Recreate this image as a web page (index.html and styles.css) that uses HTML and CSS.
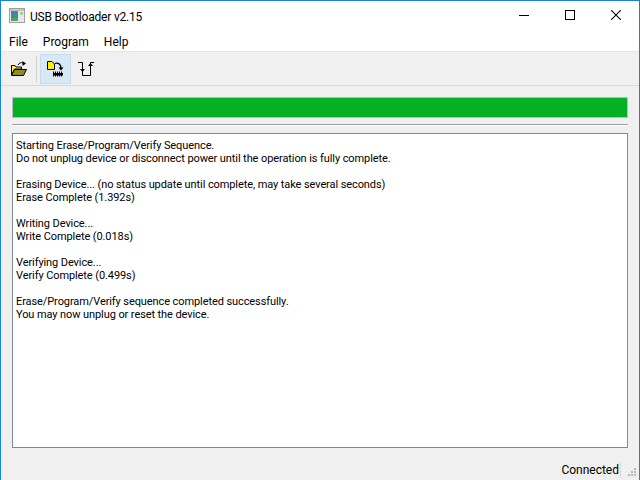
FILE: index.html
```html
<!DOCTYPE html>
<html lang="en">
<head>
<meta charset="utf-8">
<title>USB Bootloader v2.15</title>
<link rel="stylesheet" href="styles.css">
</head>
<body>
<div class="window">
  <header class="titlebar">
    <svg class="appicon" width="16" height="16" viewBox="0 0 16 16">
      <rect x="0.5" y="0.5" width="15" height="14" fill="#e8e8e8" stroke="#a0a0a0"/>
      <rect x="1" y="1" width="14" height="2" fill="#c4c4c4"/>
      <rect x="2" y="3" width="7" height="10" fill="#3f8f8f"/>
      <rect x="2" y="3" width="7" height="3" fill="#5a78a8"/>
      <rect x="2" y="10" width="7" height="3" fill="#5aa060"/>
      <rect x="11" y="4" width="3" height="3" fill="#a8d0a8"/>
    </svg>
    <span class="title">USB Bootloader v2.15</span>
    <div class="winbtns">
      <svg class="winbtn" width="10" height="10" viewBox="0 0 10 10"><path d="M0 5.5H10" stroke="#000" fill="none"/></svg>
      <svg class="winbtn" width="10" height="10" viewBox="0 0 10 10"><rect x="0.5" y="0.5" width="9" height="9" fill="none" stroke="#000"/></svg>
      <svg class="winbtn" width="10" height="10" viewBox="0 0 10 10"><path d="M0 0L10 10M10 0L0 10" stroke="#000" fill="none" stroke-width="1.05"/></svg>
    </div>
  </header>
  <nav class="menubar">
    <span class="menu">File</span>
    <span class="menu">Program</span>
    <span class="menu">Help</span>
  </nav>
  <div class="toolbar">
    <button class="tool">
      <svg width="17" height="18" viewBox="0 0 17 18">
        <path d="M1.5 5.5H5L6 7H11.5V9H4.5L1.5 15Z" fill="#ffe960" stroke="#000"/>
        <path d="M1.5 15.5L4.5 9.5H16.5L13.5 15.5Z" fill="#8f8f18" stroke="#000"/>
        <path d="M8 5C9 3 11 2 13 3" fill="none" stroke="#000"/>
        <path d="M12.5 1L16 3.5L12.5 6Z" fill="#000"/>
      </svg>
    </button>
    <span class="tooldiv"></span>
    <button class="tool active">
      <svg width="17" height="18" viewBox="0 0 17 18">
        <path d="M0.5 1.5H5L7.5 4V9.5H0.5Z" fill="#ffef00" stroke="#000"/>
        <path d="M8 3.5C11 2.5 14 4 14 8" fill="none" stroke="#000" stroke-width="1.3"/>
        <path d="M11.5 7.5H16.5L14 10.5Z" fill="#000"/>
        <rect x="6" y="13" width="10" height="2.5" fill="#000"/>
        <path d="M6.5 11.5V16.5M8.5 11.5V16.5M10.5 11.5V16.5M12.5 11.5V16.5M14.5 11.5V16.5" stroke="#000"/>
      </svg>
    </button>
    <button class="tool plain">
      <svg width="17" height="18" viewBox="0 0 17 18">
        <path d="M0 2.5H4.5V15.5H12.5V2.5H16" fill="none" stroke="#000"/>
        <path d="M2 9H7L4.5 12Z" fill="#000"/>
        <path d="M10 6H15L12.5 3Z" fill="#000"/>
      </svg>
    </button>
  </div>
  <main class="content">
    <div class="progress"><div class="bar"></div></div>
    <hr class="rule">
    <div class="log">
      <p>Starting Erase/Program/Verify Sequence.<br>Do not unplug device or disconnect power until the operation is fully complete.</p>
      <p>Erasing Device... (no status update until complete, may take several seconds)<br>Erase Complete (1.392s)</p>
      <p>Writing Device...<br>Write Complete (0.018s)</p>
      <p>Verifying Device...<br>Verify Complete (0.499s)</p>
      <p>Erase/Program/Verify sequence completed successfully.<br>You may now unplug or reset the device.</p>
    </div>
  </main>
  <footer class="statusbar">
    <span class="status">Connected</span>
    <svg class="grip" width="9" height="9" viewBox="0 0 9 9" fill="#b8b8b8">
      <rect x="6" y="0" width="2" height="2"/>
      <rect x="3" y="3" width="2" height="2"/><rect x="6" y="3" width="2" height="2"/>
      <rect x="0" y="6" width="2" height="2"/><rect x="3" y="6" width="2" height="2"/><rect x="6" y="6" width="2" height="2"/>
    </svg>
  </footer>
</div>
</body>
</html>
```
FILE: styles.css
```css
* { box-sizing: border-box; }
html, body { margin: 0; padding: 0; }
body { width: 640px; height: 480px; overflow: hidden; font-family: Roboto, "Noto Sans", sans-serif; font-size: 12px; color: #000; }
.window { width: 640px; height: 480px; display: flex; flex-direction: column; background: #f0f0f0; border: 1px solid #1883d7; border-bottom: 0; }
.titlebar { height: 31px; flex: none; background: #fff; display: flex; align-items: center; padding-left: 8px; }
.appicon { flex: none; align-self: flex-start; margin-top: 7px; }
.title { margin-left: 5px; font-size: 12px; letter-spacing: -0.2px; }
.winbtns { margin-left: auto; display: flex; align-self: flex-start; margin-top: 9px; }
.winbtn { flex: none; padding: 0 18px; height: 10px; box-sizing: content-box; width: 10px; }
.menubar { height: 20px; flex: none; background: #fff; display: flex; align-items: center; padding-left: 1px; border-bottom: 1px solid #e6e6e6; }
.menu { padding: 0 8px 0 7px; font-size: 12px; }
.toolbar { height: 34px; flex: none; display: flex; align-items: flex-start; padding: 2px 0 0 2px; border-bottom: 1px solid #d9d9d9; gap: 1px; }
.tool { width: 31px; height: 30px; padding: 0; margin: 0; border: 1px solid transparent; background: none; display: flex; align-items: center; justify-content: center; }
.tool.active { background: #d9e8f5; border-color: #c4dcf0; }
.tool.plain { margin-left: -1px; }
.tooldiv { width: 1px; height: 26px; background: #d0d0d0; margin: 2px 2px 0 1px; }
.content { flex: 1; display: flex; flex-direction: column; padding: 11px 11px 0; min-height: 0; }
.progress { height: 21px; flex: none; border: 1px solid #bcbcbc; background: #e6e6e6; }
.bar { height: 100%; background: #06b025; }
.rule { margin: 6px 0 7px; height: 2px; border: 0; border-top: 1px solid #a0a0a0; border-bottom: 1px solid #fff; flex: none; }
.log { height: 315px; flex: none; background: #fff; border: 1px solid #828790; padding: 5px 3px; line-height: 13px; font-size: 11px; letter-spacing: -0.09px; }
.log p { margin: 0 0 13px; }
.statusbar { flex: 1; display: flex; align-items: flex-end; justify-content: flex-end; padding: 0 2px 2px 0; }
.status { margin-right: 7px; line-height: 16px; border-right: 1px solid #d9d9d9; padding-right: 1px; }
.grip { flex: none; margin-bottom: 1px; }
```
